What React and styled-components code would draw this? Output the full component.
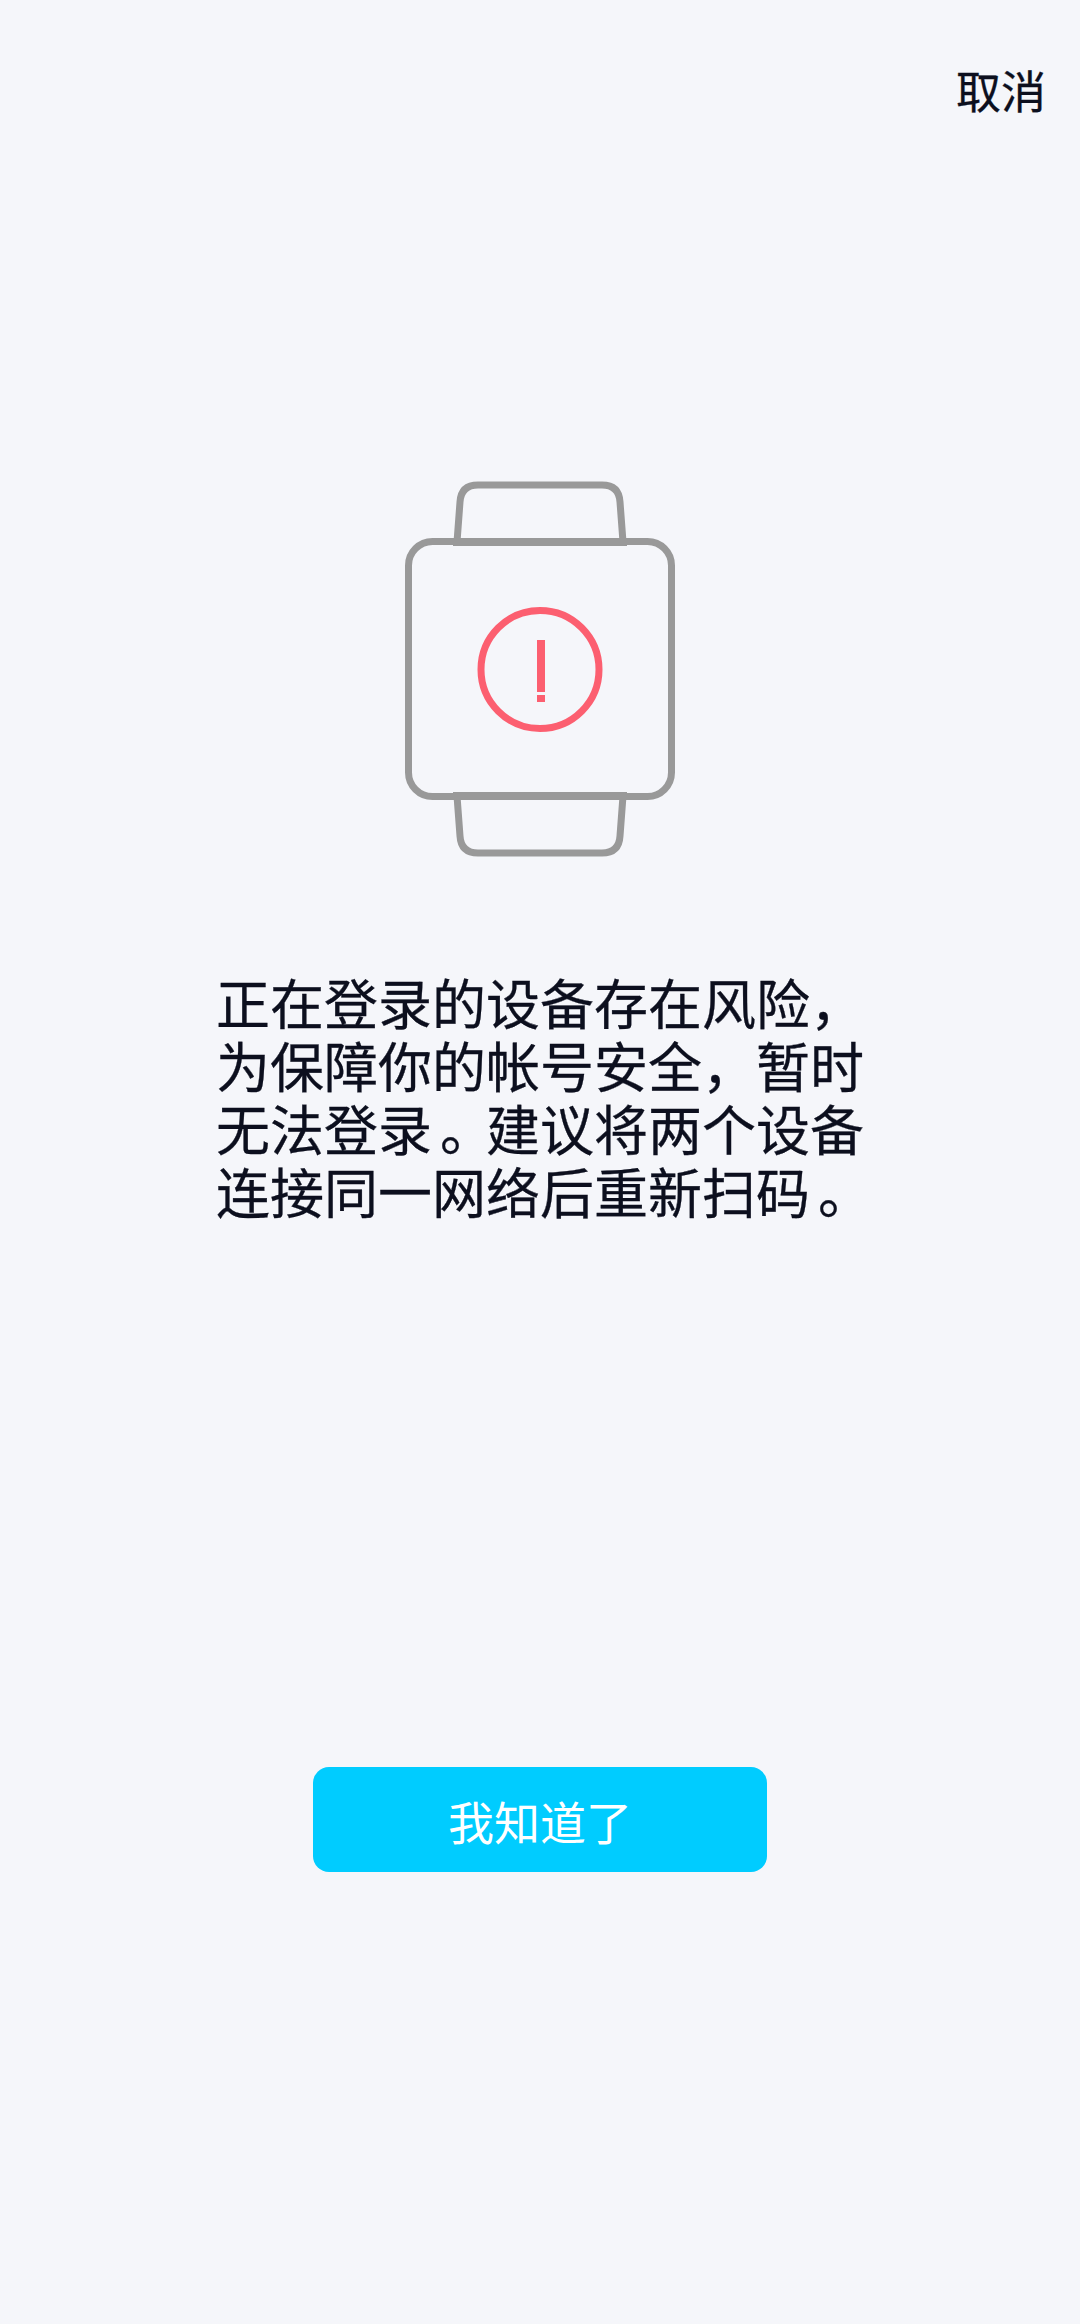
import styled, { createGlobalStyle } from 'styled-components'

const GlobalStyle = createGlobalStyle`
	html, body {
		margin: 0;
		padding: 0;
		background: #f5f6fa;
	}
`

const Page = styled.div`
	display: flex;
	flex-direction: column;
	align-items: center;
	box-sizing: border-box;
	width: 1080px;
	height: 2324px;
	overflow: hidden;
	background: #f5f6fa;
	color: #0c0f1e;
	font-family: "Noto Sans CJK SC", "Noto Sans", sans-serif;
`

const Header = styled.div`
	display: flex;
	justify-content: flex-end;
	align-self: stretch;
	height: 460px;
	padding: 57px 34px 0 0;
	box-sizing: border-box;
`

const CancelLink = styled.span`
	font-size: 45px;
	line-height: 66px;
	-webkit-text-stroke: 0.3px #0c0f1e;
`

const WatchIcon = styled.svg`
	display: block;
	width: 320px;
	height: 410px;
	flex-shrink: 0;
`

const Message = styled.p`
	width: 648px;
	margin: 100px 0 0;
	font-size: 54px;
	line-height: 63px;
	white-space: nowrap;
	-webkit-text-stroke: 0.3px #0c0f1e;
`

const Line = styled.span`
	display: block;
`

// the full stop sits nearer the middle of its cell than the font draws it
const Period = styled.span`
	margin: 0 -8px 0 8px;
`

const ConfirmButton = styled.button`
	width: 454px;
	height: 105px;
	margin-top: 545px;
	padding: 0;
	border: none;
	border-radius: 16px;
	background: #00ccff;
	color: #ffffff;
	font-family: inherit;
	font-size: 46px;
`

const App = () => {
	return (
		<Page>
			<GlobalStyle />
			<Header>
				<CancelLink>取消</CancelLink>
			</Header>
			{/* Watch with warning */}
			<WatchIcon viewBox="0 0 320 410" fill="none">
				<g stroke="#999999" strokeWidth="7">
					<rect x="28.5" y="81.5" width="263" height="255" rx="24" />
					<path d="M77 82 L80 42 Q81 25 98 25 L222 25 Q239 25 240 42 L243 82" />
					<path d="M77 336 L80 376 Q81 393 98 393 L222 393 Q239 393 240 376 L243 336" />
					<path d="M73 82 H247 M73 336 H247" strokeWidth="8" />
				</g>
				<circle cx="160" cy="209.5" r="59" stroke="#fc5f70" strokeWidth="7" />
				<path d="M157 180 H165 V232 H157 Z M157 235 H165 V242 H157 Z" fill="#fc5f70" />
			</WatchIcon>
			<Message>
				<Line>正在登录的设备存在风险，</Line>
				<Line>为保障你的帐号安全，暂时</Line>
				<Line>无法登录<Period>。</Period>建议将两个设备</Line>
				<Line>连接同一网络后重新扫码<Period>。</Period></Line>
			</Message>
			<ConfirmButton>我知道了</ConfirmButton>
		</Page>
	)
}

export default App
